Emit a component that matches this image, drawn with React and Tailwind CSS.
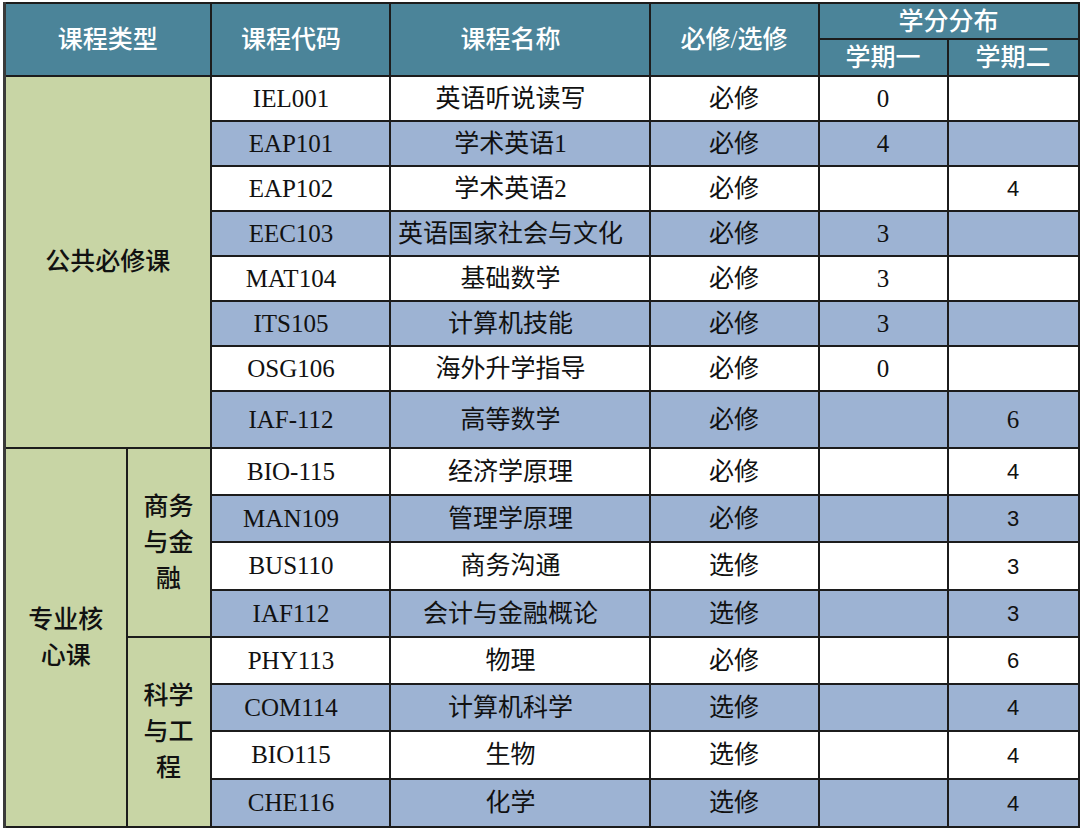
const serif = { fontFamily: '"Liberation Serif", "Noto Sans CJK SC", serif' };

const rows = [
  { code: "IEL001", name: "英语听说读写", req: "必修", s1: "0", s2: "", h: "h-[45px]" },
  { code: "EAP101", name: "学术英语1", req: "必修", s1: "4", s2: "", h: "h-[45px]" },
  { code: "EAP102", name: "学术英语2", req: "必修", s1: "", s2: "4", h: "h-[45px]" },
  { code: "EEC103", name: "英语国家社会与文化", req: "必修", s1: "3", s2: "", h: "h-[45px]" },
  { code: "MAT104", name: "基础数学", req: "必修", s1: "3", s2: "", h: "h-[45px]" },
  { code: "ITS105", name: "计算机技能", req: "必修", s1: "3", s2: "", h: "h-[45px]" },
  { code: "OSG106", name: "海外升学指导", req: "必修", s1: "0", s2: "", h: "h-[45px]" },
  { code: "IAF-112", name: "高等数学", req: "必修", s1: "", s2: "6", h: "h-[57px]", serif2: true },
  { code: "BIO-115", name: "经济学原理", req: "必修", s1: "", s2: "4", h: "h-[47px]" },
  { code: "MAN109", name: "管理学原理", req: "必修", s1: "", s2: "3", h: "h-[47px]" },
  { code: "BUS110", name: "商务沟通", req: "选修", s1: "", s2: "3", h: "h-[48px]" },
  { code: "IAF112", name: "会计与金融概论", req: "选修", s1: "", s2: "3", h: "h-[47px]" },
  { code: "PHY113", name: "物理", req: "必修", s1: "", s2: "6", h: "h-[47px]" },
  { code: "COM114", name: "计算机科学", req: "选修", s1: "", s2: "4", h: "h-[47px]" },
  { code: "BIO115", name: "生物", req: "选修", s1: "", s2: "4", h: "h-[48px]" },
  { code: "CHE116", name: "化学", req: "选修", s1: "", s2: "4", h: "h-[48px]" },
];

const cell = "border-2 border-[#1c1c1c] text-center align-middle p-0";
const head = `${cell} bg-[#4b8499] text-white text-[25px] font-medium`;
const green = `${cell} bg-[#c8d5a5] text-[#111] text-[25px] leading-[36px] font-medium`;

function Category({ index }) {
  if (index === 0) {
    return (
      <td rowSpan={8} colSpan={2} className={green}>
        公共必修课
      </td>
    );
  }
  if (index === 8) {
    return (
      <>
        <td rowSpan={8} className={green}>
          专业核<br />心课
        </td>
        <td rowSpan={4} className={green}>
          商务<br />与金<br />融
        </td>
      </>
    );
  }
  if (index === 12) {
    return (
      <td rowSpan={4} className={green}>
        科学<br />与工<br />程
      </td>
    );
  }
  return null;
}

export default function App() {
  return (
    <div className="w-[1080px] h-[829px] bg-white pt-[2px] pl-[3px]" style={serif}>
      <table className="table-fixed border-collapse w-[1074px] border-l-[3px] border-[#3a3a3a]">
        <colgroup>
          <col className="w-[122px]" />
          <col className="w-[84px]" />
          <col className="w-[179px]" />
          <col className="w-[260px]" />
          <col className="w-[169px]" />
          <col className="w-[129px]" />
          <col className="w-[131px]" />
        </colgroup>
        <thead>
          <tr className="h-[36px]">
            <th rowSpan={2} colSpan={2} className={head}>课程类型</th>
            <th rowSpan={2} className={`${head} pr-[18px]`}>课程代码</th>
            <th rowSpan={2} className={`${head} pr-[18px]`}>课程名称</th>
            <th rowSpan={2} className={head}>必修/选修</th>
            <th colSpan={2} className={`${head} leading-none`}>学分分布</th>
          </tr>
          <tr className="h-[37px]">
            <th className={`${head} leading-none`}>学期一</th>
            <th className={`${head} leading-none`}>学期二</th>
          </tr>
        </thead>
        <tbody className="text-[25px] text-[#111]">
          {rows.map((r, i) => {
            const bg = i % 2 === 0 ? "bg-white" : "bg-[#9db3d3]";
            return (
              <tr key={r.code} className={r.h}>
                <Category index={i} />
                <td className={`${cell} ${bg} pr-[18px]`}>{r.code}</td>
                <td className={`${cell} ${bg} pr-[18px]`}>{r.name}</td>
                <td className={`${cell} ${bg}`}>{r.req}</td>
                <td className={`${cell} ${bg}`}>{r.s1}</td>
                <td
                  className={`${cell} ${bg} ${r.serif2 ? "" : "text-[22px]"}`}
                  style={r.serif2 ? undefined : { fontFamily: '"Liberation Sans", sans-serif' }}
                >
                  {r.s2}
                </td>
              </tr>
            );
          })}
        </tbody>
      </table>
    </div>
  );
}
